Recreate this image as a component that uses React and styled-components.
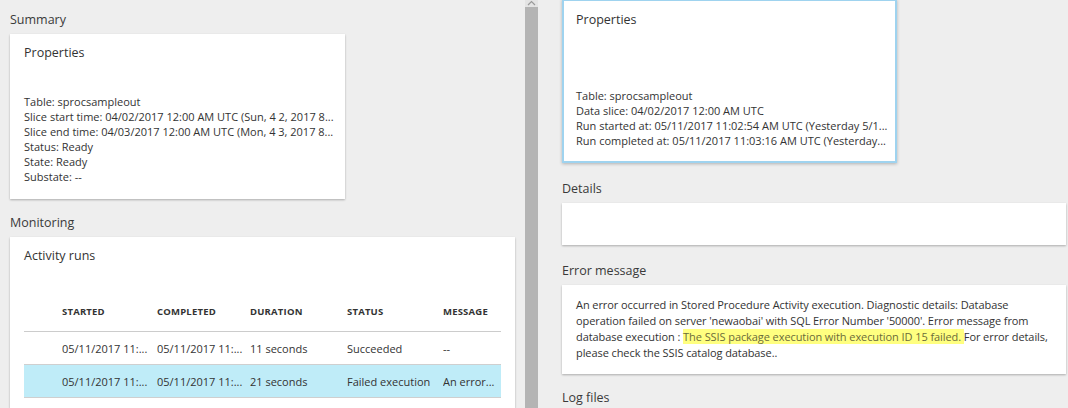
import styled, { createGlobalStyle } from "styled-components";

const GlobalStyle = createGlobalStyle`
  html, body {
    margin: 0;
    padding: 0;
    background: #eeeeee;
    font-family: "Open Sans", "Noto Sans", sans-serif;
    color: #333333;
  }
`;

const runs = [
  { started: "05/11/2017 11:...", completed: "05/11/2017 11:...", duration: "11 seconds", status: "Succeeded", message: "--" },
  { started: "05/11/2017 11:...", completed: "05/11/2017 11:...", duration: "21 seconds", status: "Failed execution", message: "An error...", selected: true },
];

const App = () => {
  return (
    <>
      <GlobalStyle />
      <Page>
        <LeftPane>
          <SectionTitle>Summary</SectionTitle>
          <Card $width="335px" $height="165px">
            <CardTitle>Properties</CardTitle>
            <PropList $top="32px">
              <li>Table: sprocsampleout</li>
              <li>Slice start time: 04/02/2017 12:00 AM UTC (Sun, 4 2, 2017 8...</li>
              <li>Slice end time: 04/03/2017 12:00 AM UTC (Mon, 4 3, 2017 8...</li>
              <li>Status: Ready</li>
              <li>State: Ready</li>
              <li>Substate: --</li>
            </PropList>
          </Card>

          <SectionTitle $top="15px">Monitoring</SectionTitle>
          <Card $grow>
            <CardTitle>Activity runs</CardTitle>
            <RunsTable>
              <thead>
                <tr>
                  <Th $w="38px"></Th>
                  <Th $w="95px">Started</Th>
                  <Th $w="93px">Completed</Th>
                  <Th $w="97px">Duration</Th>
                  <Th $w="96px">Status</Th>
                  <Th>Message</Th>
                </tr>
              </thead>
              <tbody>
                {runs.map((r, i) => (
                  <Tr key={i} $selected={r.selected}>
                    <Td></Td>
                    <Td>{r.started}</Td>
                    <Td>{r.completed}</Td>
                    <Td>{r.duration}</Td>
                    <Td>{r.status}</Td>
                    <Td>{r.message}</Td>
                  </Tr>
                ))}
              </tbody>
            </RunsTable>
          </Card>
        </LeftPane>

        <Scrollbar>
          <ScrollArrow>
            <svg width="9" height="6" viewBox="0 0 9 6">
              <path d="M1 5 L4.5 1.5 L8 5" fill="none" stroke="#9a9a9a" strokeWidth="1.2" />
            </svg>
          </ScrollArrow>
          <ScrollThumb />
        </Scrollbar>

        <RightPane>
          <SelectedCard>
            <CardTitle>Properties</CardTitle>
            <PropList $top="59px">
              <li>Table: sprocsampleout</li>
              <li>Data slice: 04/02/2017 12:00 AM UTC</li>
              <li>Run started at: 05/11/2017 11:02:54 AM UTC (Yesterday 5/1...</li>
              <li>Run completed at: 05/11/2017 11:03:16 AM UTC (Yesterday...</li>
            </PropList>
          </SelectedCard>

          <SectionTitle $top="17px">Details</SectionTitle>
          <Card $height="42px" />

          <SectionTitle $top="17px">Error message</SectionTitle>
          <Card>
            <Message>
              An error occurred in Stored Procedure Activity execution. Diagnostic details: Database
              operation failed on server 'newaobai' with SQL Error Number '50000'. Error message from
              database execution : <Mark>The SSIS package execution with execution ID 15 failed. </Mark>For error details,
              please check the SSIS catalog database..
            </Message>
          </Card>

          <SectionTitle $top="15px">Log files</SectionTitle>
        </RightPane>
      </Page>
    </>
  );
};

const Page = styled.div`
  display: flex;
  height: 408px;
  overflow: hidden;
`;

const LeftPane = styled.div`
  width: 505px;
  padding: 0 10px;
  display: flex;
  flex-direction: column;
  flex: none;
`;

const SectionTitle = styled.div`
  font-size: 12.5px;
  color: #3a3a3a;
  height: 18px;
  line-height: 18px;
  margin-top: ${(p) => p.$top || "11px"};
  margin-bottom: 5px;
  flex: none;
`;

const Card = styled.div`
  background: #ffffff;
  box-shadow: 0 1px 2px rgba(0, 0, 0, 0.28);
  box-sizing: border-box;
  padding: 10px 14px 0 14px;
  width: ${(p) => p.$width || "auto"};
  height: ${(p) => p.$height || "auto"};
  flex: ${(p) => (p.$grow ? "1 0 auto" : "none")};
`;

const SelectedCard = styled.div`
  background: #ffffff;
  border: 2px solid #9fd3ef;
  box-shadow: 0 1px 3px rgba(0, 0, 0, 0.25);
  box-sizing: border-box;
  width: 335px;
  height: 164px;
  padding: 10px 12px 0 12px;
  margin-top: -1px;
  flex: none;
`;

const CardTitle = styled.div`
  font-size: 12.5px;
  color: #333333;
  line-height: 18px;
`;

const PropList = styled.ul`
  list-style: none;
  margin: ${(p) => p.$top} 0 0 0;
  padding: 0;
  font-size: 11px;
  line-height: 15px;
  color: #333333;
  white-space: nowrap;
`;

const RunsTable = styled.table`
  width: 100%;
  border-collapse: collapse;
  margin-top: 40px;
  font-size: 11px;
  table-layout: fixed;
`;

const Th = styled.th`
  width: ${(p) => p.$w || "auto"};
  text-align: left;
  vertical-align: bottom;
  font-size: 9.5px;
  font-weight: 700;
  letter-spacing: 0.2px;
  text-transform: uppercase;
  color: #333333;
  line-height: 14px;
  padding: 0 0 12px 0;
  border-bottom: 1px solid #cccccc;
`;

const Tr = styled.tr`
  background: ${(p) => (p.$selected ? "#bfecf8" : "transparent")};
`;

const Td = styled.td`
  height: 32px;
  padding: 0;
  border-bottom: 1px solid #cfcfcf;
  white-space: nowrap;
  overflow: hidden;
  color: #333333;
`;

const Scrollbar = styled.div`
  width: 13px;
  display: flex;
  flex-direction: column;
  flex: none;
`;

const ScrollArrow = styled.div`
  height: 7px;
  background: #e4e4e4;
  display: flex;
  justify-content: center;
  align-items: flex-start;
`;

const ScrollThumb = styled.div`
  flex: 1;
  background: #b4b4b4;
`;

const RightPane = styled.div`
  flex: 1;
  padding: 0 2px 0 24px;
  display: flex;
  flex-direction: column;
`;

const Message = styled.p`
  margin: 2px 0 0 0;
  padding-bottom: 13px;
  font-size: 11px;
  line-height: 16px;
  letter-spacing: -0.08px;
  color: #333333;
`;

const Mark = styled.span`
  background: #ffff80;
  color: #6b6b3a;
`;

export default App;
